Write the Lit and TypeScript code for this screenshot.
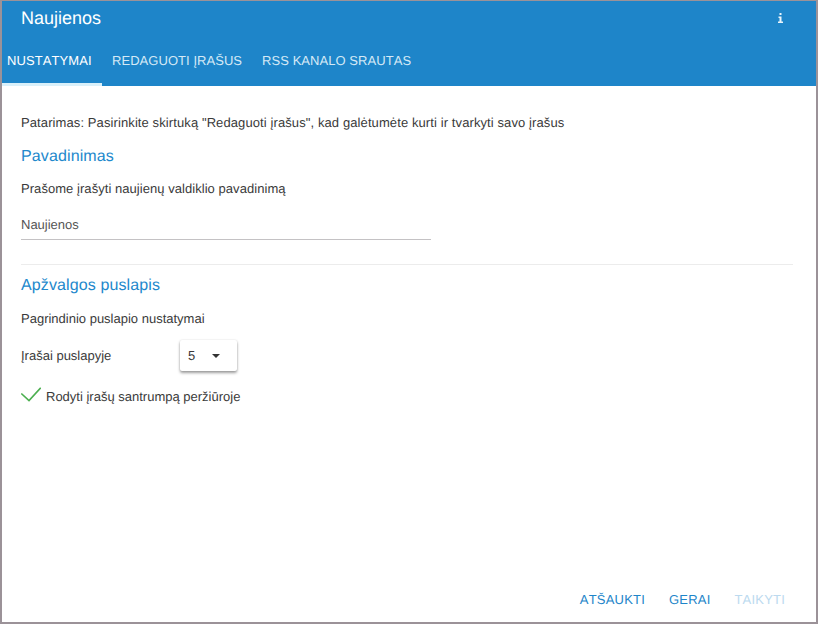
import { LitElement, html, css } from "lit";
import { customElement } from "lit/decorators.js";

@customElement("app-root")
export class AppRoot extends LitElement {
  static styles = css`
    :host { display: block; width: 818px; height: 624px; font-family: "Liberation Sans", Arial, sans-serif; color: #3a3a3a; box-sizing: border-box; text-rendering: geometricPrecision; }
    .frame { box-sizing: border-box; width: 818px; height: 624px; border: 1px solid #9b9298; border-left-width: 2px; border-right-width: 2px; border-bottom-width: 2px; display: flex; flex-direction: column; background: #fff; }
    .head { background: #1e85c9; height: 85px; display: flex; flex-direction: column; flex: none; }
    .titlebar { height: 35px; display: flex; align-items: center; justify-content: space-between; padding: 0 33px 0 19px; }
    .title { font-size: 18px; color: #fff; line-height: 35px; }
    .info { width: 5px; height: 10px; display: block; margin-top: -1px; }
    .tabs { display: flex; height: 50px; }
    .tab { padding: 0 10px; font-size: 13px; color: #d4e9f6; line-height: 50px; height: 50px; box-sizing: border-box; letter-spacing: 0.05px; font-kerning: none; }
    .tab.first { padding: 0 10px 0 5px; color: #fff; border-bottom: 3px solid #d9f0fa; width: 100px; letter-spacing: .1px; }
    .content { flex: 1; padding: 0 23px 0 19px; font-size: 13px; display: flex; flex-direction: column; }
    .hint { margin-top: 29px; line-height: 16px; letter-spacing: .1px; }
    h2 { font-size: 16px; font-weight: 400; color: #2288cc; line-height: 20px; margin: 0; letter-spacing: .12px; }
    .h1 { margin-top: 16px; }
    .p1 { margin-top: 14px; line-height: 16px; letter-spacing: .05px; }
    .field { margin-top: 19px; width: 410px; height: 24px; box-sizing: border-box; border-bottom: 1px solid #c4c2c4; color: #555; line-height: 17px; }
    .sep { margin-top: 24px; border-top: 1px solid #ececec; }
    .h2 { margin-top: 11px; }
    .p2 { margin-top: 15px; line-height: 16px; }
    .row { display: flex; align-items: center; margin-top: 13px; height: 31px; }
    .rowlabel { width: 159px; }
    .select { width: 57px; height: 31px; box-sizing: border-box; padding: 0 0 0 8px; display: flex; align-items: center; gap: 17px; background: #fff; border-radius: 2px; box-shadow: 0 2px 3px rgba(0,0,0,.38), 0 0 2px rgba(0,0,0,.12); }
    .arrow { width: 0; height: 0; border: 4.5px solid transparent; border-top: 4px solid #333; border-bottom: 0; }
    .check { display: flex; align-items: center; margin-top: 13px; gap: 5px; height: 24px; }
    .check svg { width: 20px; height: 15px; margin-top: -4px; }
    .foot { display: flex; justify-content: flex-end; gap: 24px; padding: 0 31px 14px 0; font-size: 13px; line-height: 16px; color: #1e85c9; flex: none; letter-spacing: .2px; font-kerning: none; }
    .dis { color: #bcdaef; }
  `;
  render() {
    return html`<div class="frame">
      <div class="head">
        <div class="titlebar">
          <span class="title">Naujienos</span>
          <svg class="info" viewBox="0 0 5 10"><path fill="#e8f4fb" d="M1.500 0h2v2h-2zM0.500 3.500h3v5h1.500v1.500H0v-1.500h1.500v-3.500h-1z"/></svg>
        </div>
        <div class="tabs">
          <div class="tab first">NUSTATYMAI</div>
          <div class="tab">REDAGUOTI ĮRAŠUS</div>
          <div class="tab">RSS KANALO SRAUTAS</div>
        </div>
      </div>
      <div class="content">
        <div class="hint">Patarimas: Pasirinkite skirtuką "Redaguoti įrašus", kad galėtumėte kurti ir tvarkyti savo įrašus</div>
        <h2 class="h1">Pavadinimas</h2>
        <div class="p1">Prašome įrašyti naujienų valdiklio pavadinimą</div>
        <div class="field">Naujienos</div>
        <div class="sep"></div>
        <h2 class="h2">Apžvalgos puslapis</h2>
        <div class="p2">Pagrindinio puslapio nustatymai</div>
        <div class="row"><span class="rowlabel">Įrašai puslapyje</span><div class="select"><span>5</span><span class="arrow"></span></div></div>
        <div class="check"><svg viewBox="0 0 20 15"><path fill="none" stroke="#4caf50" stroke-width="1.600" d="M0.300 6.500L8 13.500L19.700 0.800"/></svg><span>Rodyti įrašų santrumpą peržiūroje</span></div>
      </div>
      <div class="foot"><span>ATŠAUKTI</span><span>GERAI</span><span class="dis">TAIKYTI</span></div>
    </div>`;
  }
}
